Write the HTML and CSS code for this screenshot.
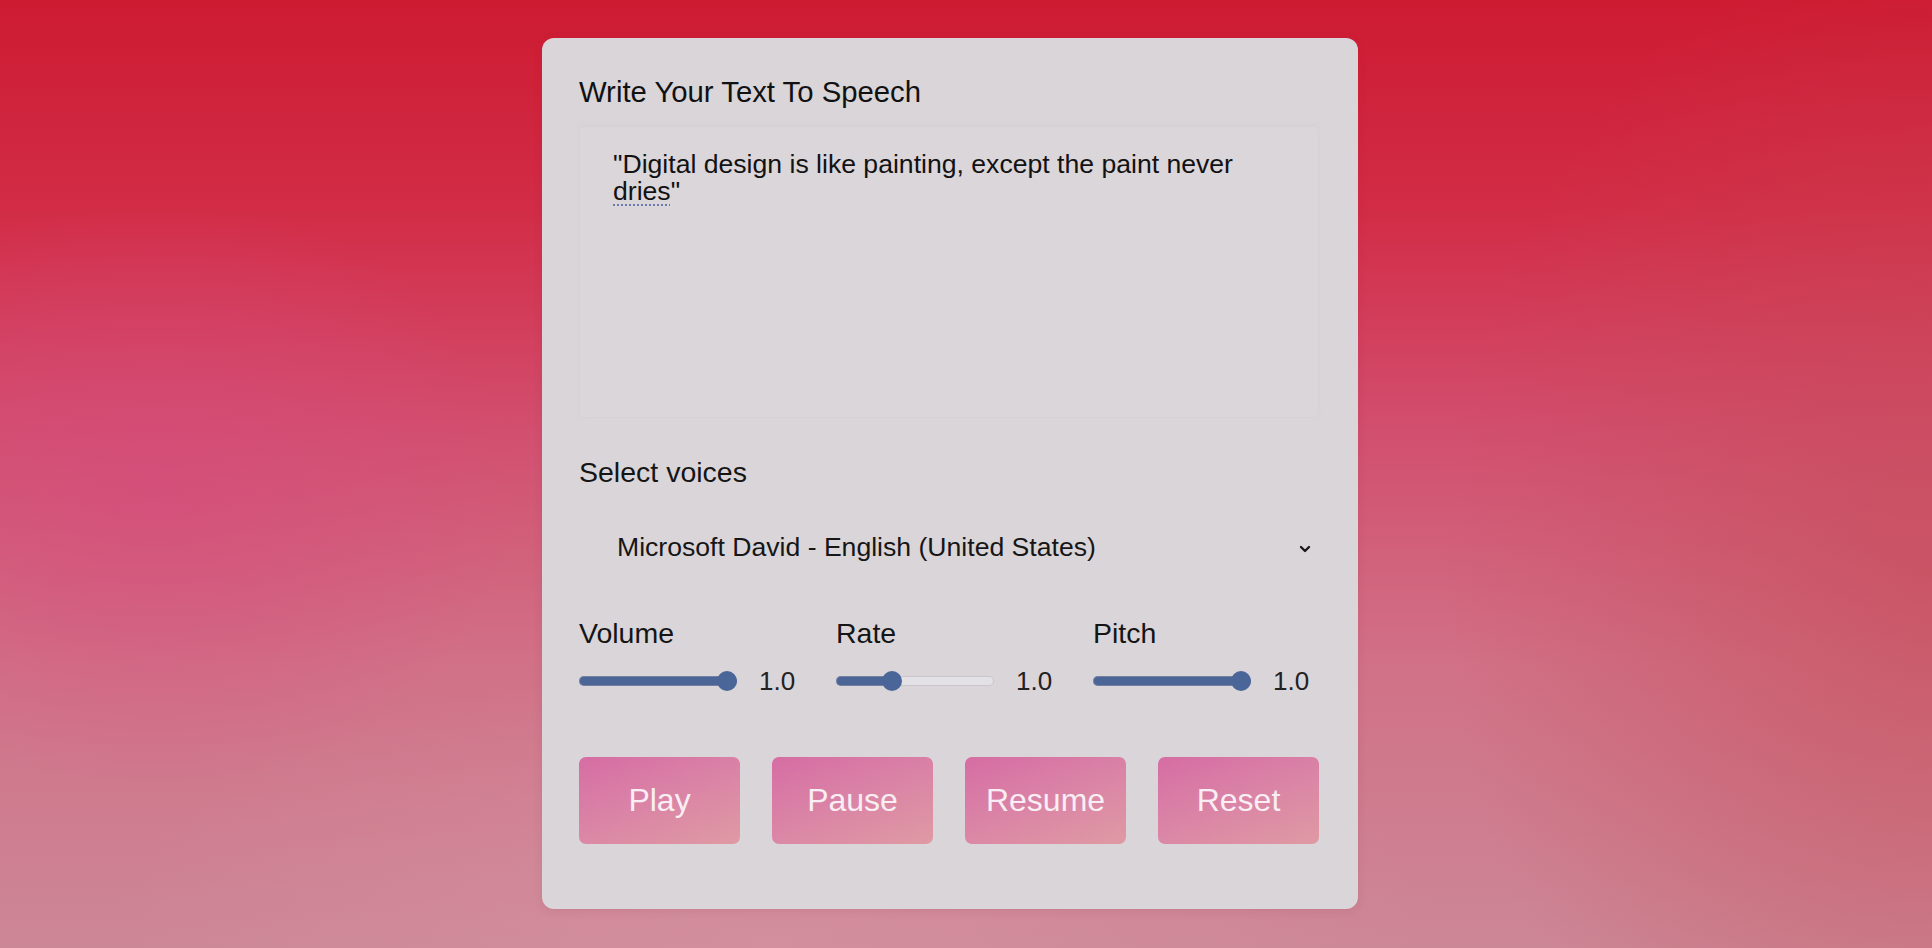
FILE: index.html
```html
<!DOCTYPE html>
<html lang="en">
<head>
<meta charset="utf-8">
<title>Text To Speech</title>
<link rel="stylesheet" href="styles.css">
</head>
<body>
<main class="card">
  <h1 class="title">Write Your Text To Speech</h1>
  <div class="textarea" role="textbox" aria-multiline="true">"Digital design is like painting, except the paint never <span class="spell">dries</span>"</div>

  <label class="label voices-label" for="voices">Select voices</label>
  <div class="select-wrap">
    <select id="voices" class="select">
      <option>Microsoft David - English (United States)</option>
    </select>
    <svg class="chevron" width="12" height="8" viewBox="0 0 12 8" aria-hidden="true"><path d="M2 2 L6 6 L10 2" fill="none" stroke="#1a1a1a" stroke-width="2.4" stroke-linecap="round" stroke-linejoin="round"/></svg>
  </div>

  <div class="controls">
    <div class="control">
      <span class="label">Volume</span>
      <div class="slider-row">
        <input type="range" class="range" min="0" max="1" step="0.1" value="1" style="--p:100%">
        <span class="value">1.0</span>
      </div>
    </div>
    <div class="control">
      <span class="label">Rate</span>
      <div class="slider-row">
        <input type="range" class="range" min="0.5" max="2" step="0.1" value="1" style="--p:33.3%">
        <span class="value">1.0</span>
      </div>
    </div>
    <div class="control">
      <span class="label">Pitch</span>
      <div class="slider-row">
        <input type="range" class="range" min="0" max="1" step="0.1" value="1" style="--p:100%">
        <span class="value">1.0</span>
      </div>
    </div>
  </div>

  <div class="buttons">
    <button class="btn">Play</button>
    <button class="btn">Pause</button>
    <button class="btn">Resume</button>
    <button class="btn">Reset</button>
  </div>
</main>
</body>
</html>
```
FILE: styles.css
```css
* { box-sizing: border-box; }

html, body { height: 100%; }

body {
  margin: 0;
  min-height: 948px;
  display: flex;
  justify-content: center;
  align-items: flex-start;
  padding: 38px 32px 0 0;
  font-family: "Liberation Sans", Arial, sans-serif;
  color: #141414;
  background:
    radial-gradient(ellipse 520px 420px at 8% 52%, rgba(214, 74, 126, 0.55), rgba(214, 74, 126, 0) 70%),
    radial-gradient(ellipse 700px 900px at 100% 60%, rgba(196, 74, 84, 0.6), rgba(196, 74, 84, 0) 70%),
    radial-gradient(ellipse 900px 380px at 40% 100%, rgba(214, 146, 160, 0.7), rgba(214, 146, 160, 0) 75%),
    linear-gradient(180deg, #cd1b32 0%, #d22c46 22%, #d24e6e 45%, #d17187 70%, #cc8796 100%);
  overflow: hidden;
}

.card {
  width: 816px;
  height: 871px;
  background: #dad5d9;
  border-radius: 12px;
  padding: 37px 39px 0 37px;
  display: flex;
  flex-direction: column;
  box-shadow: 0 2px 10px rgba(120, 30, 50, 0.1);
}

.title {
  margin: 0;
  font-size: 29.3px;
  font-weight: 400;
  line-height: 34px;
  color: #111;
}

.textarea {
  margin-top: 17px;
  height: 292px;
  padding: 24px 33px 0 33px;
  font-size: 26.6px;
  line-height: 27px;
  color: #121212;
  background: #dbd6da;
  border: 1px solid rgba(205, 199, 205, 0.25);
  border-radius: 4px;
  box-shadow: 0 -2px 4px rgba(200, 195, 205, 0.2);
}

.spell {
  text-decoration: underline dotted #6a7ab0;
  text-decoration-thickness: 2px;
  text-underline-offset: 4px;
}

.label {
  font-size: 28.5px;
  line-height: 32px;
  color: #151515;
}

.voices-label {
  margin-top: 38px;
  display: block;
}

.select-wrap {
  position: relative;
  margin-top: 29px;
  height: 60px;
}

.select {
  -webkit-appearance: none;
  appearance: none;
  width: 100%;
  height: 60px;
  padding: 0 40px 0 38px;
  border: none;
  border-radius: 4px;
  background: #dad5d9;
  font-family: "Liberation Sans", Arial, sans-serif;
  font-size: 26.6px;
  color: #161616;
  outline: none;
}

.chevron {
  position: absolute;
  right: 8px;
  top: 28px;
  pointer-events: none;
}

.controls {
  margin-top: 40px;
  display: grid;
  grid-template-columns: repeat(3, 226px);
  column-gap: 31px;
}

.control {
  display: flex;
  flex-direction: column;
  gap: 16px;
}

.slider-row {
  display: flex;
  align-items: center;
  height: 32px;
}

.value {
  margin-left: 22px;
  font-size: 26px;
  color: #222;
}

.range {
  -webkit-appearance: none;
  appearance: none;
  margin: 0;
  width: 158px;
  height: 20px;
  background: transparent;
}

.range::-webkit-slider-runnable-track {
  height: 10px;
  border-radius: 5px;
  background: linear-gradient(90deg, #4b6596 0, #4b6596 var(--p), #e4e1e6 var(--p), #e4e1e6 100%);
  box-shadow: inset 0 0 0 1px rgba(170, 165, 175, 0.45);
}

.range::-webkit-slider-thumb {
  -webkit-appearance: none;
  appearance: none;
  width: 20px;
  height: 20px;
  margin-top: -5px;
  border-radius: 50%;
  background: #4a6597;
  border: none;
}

.buttons {
  margin-top: 60px;
  display: grid;
  grid-template-columns: repeat(4, 1fr);
  column-gap: 32px;
}

.btn {
  height: 87px;
  border: none;
  border-radius: 7px;
  background: linear-gradient(160deg, #d66da4 0%, #da82a6 45%, #df9aa3 100%);
  color: #f8eef3;
  font-family: "Liberation Sans", Arial, sans-serif;
  font-size: 32px;
  cursor: pointer;
}
```
